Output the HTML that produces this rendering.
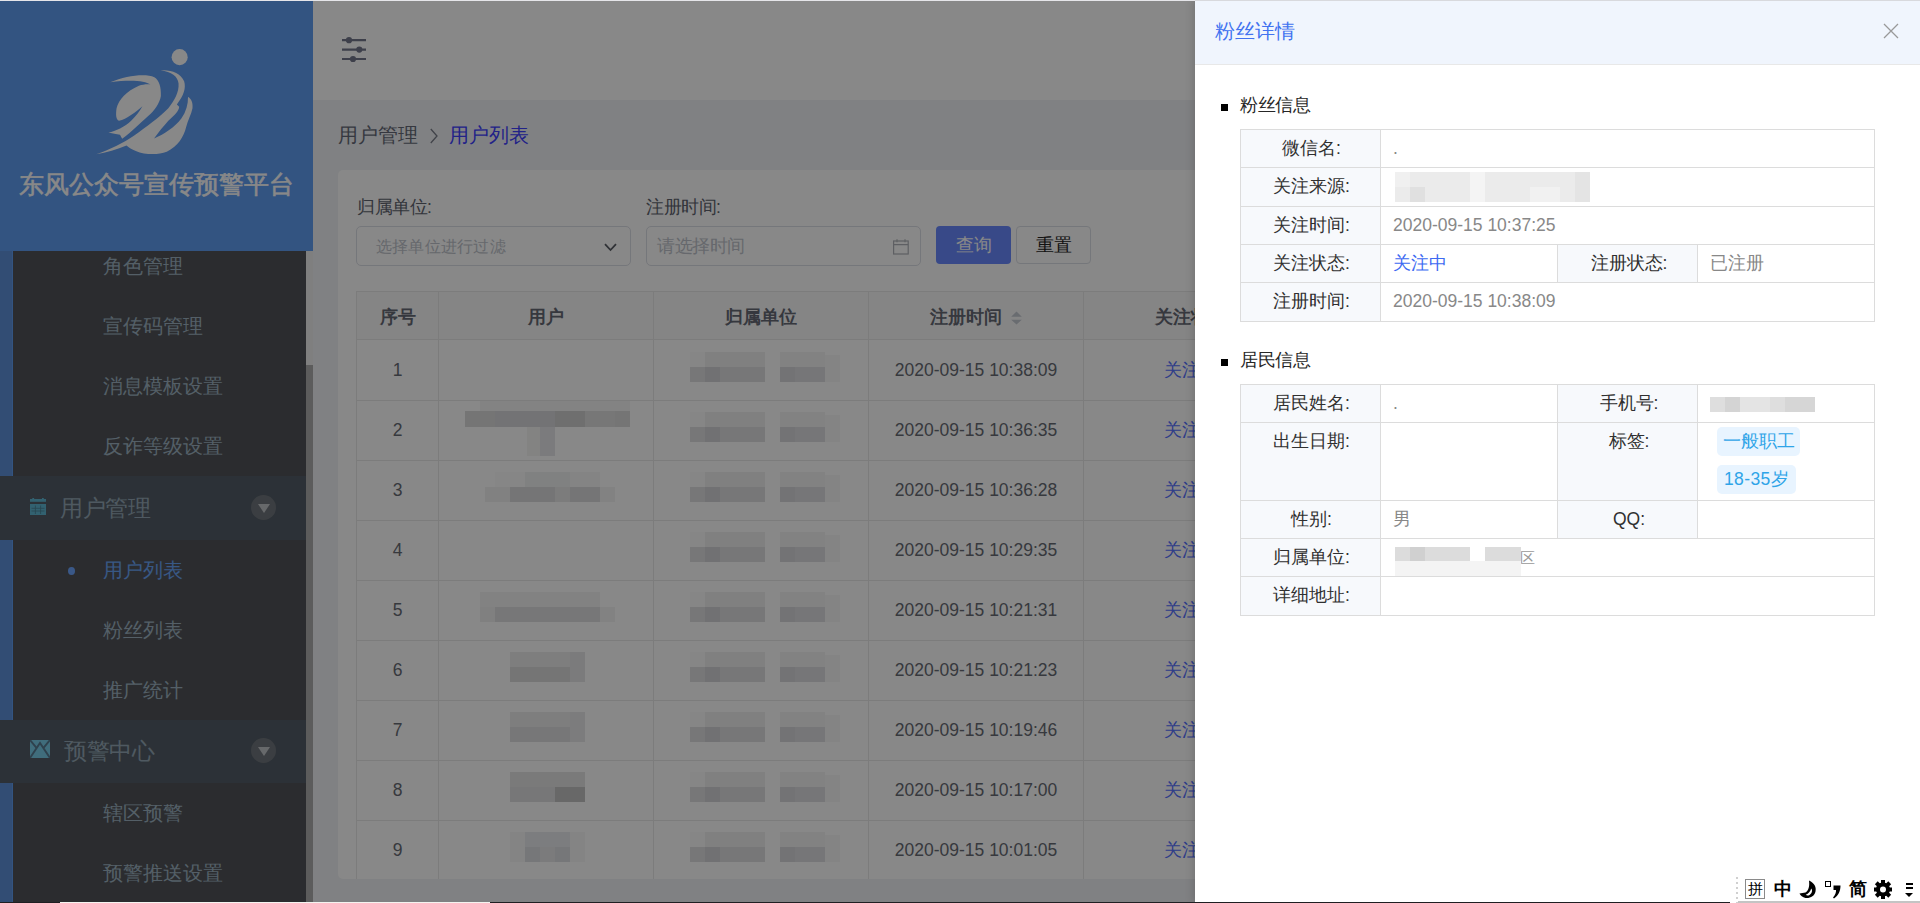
<!DOCTYPE html>
<html lang="zh">
<head>
<meta charset="utf-8">
<title>粉丝详情</title>
<style>
*{box-sizing:border-box;margin:0;padding:0}
html,body{width:1920px;height:903px;overflow:hidden;background:#f0f2f5}
body{position:relative;font-family:"Liberation Sans",sans-serif;font-size:17.5px;color:#333}
.abs{position:absolute}
/* ---------- sidebar ---------- */
#side{position:absolute;left:0;top:0;width:313px;height:903px;background:#619df2}
#side .strip{position:absolute;left:0;top:251px;width:12px;height:652px;background:#5e90da}
#logo{position:absolute;left:80px;top:30px;width:150px;height:140px}
#brand{position:absolute;left:0;top:165px;-webkit-text-stroke:0.55px #fff;width:313px;height:38px;line-height:38px;text-align:center;font-size:25px;font-weight:normal;color:#fff;white-space:nowrap}
#menu{position:absolute;left:13px;top:251px;width:293px;height:652px;background:#525458}
#sbar{position:absolute;left:306px;top:251px;width:7px;height:652px;background:#acacac}
#sbar i{position:absolute;left:0;top:0;width:7px;height:114px;background:#efefef}
.mi{position:absolute;left:102.5px;height:30px;line-height:30px;font-size:20px;color:#9db3c2;white-space:nowrap}
.mi.on{color:#6aa5f8}
.grp{position:absolute;left:0;width:306px;background:#535d67}
.grp span{position:absolute;top:0;font-size:25px;letter-spacing:-.5px;color:#94a8b6;white-space:nowrap}
.grp .arr{position:absolute;left:251px;width:25px;height:25px;border-radius:50%;background:#70757c}
.grp .arr:after{content:"";position:absolute;left:6.5px;top:9px;border-left:6px solid transparent;border-right:6px solid transparent;border-top:9px solid #c2c5c9}
/* ---------- main ---------- */
#hdr{position:absolute;left:313px;top:0;width:1607px;height:100px;background:#fff}
#crumb{position:absolute;left:338px;top:120px;height:30px;line-height:30px;font-size:20px;color:#666a78;white-space:nowrap}
#crumb b{font-weight:normal;color:#4040ff}
#card{position:absolute;left:338px;top:170px;width:1560px;height:709px;background:#fff;border-radius:5px}
.flabel{position:absolute;top:194px;height:26px;line-height:26px;font-size:17.5px;letter-spacing:-.5px;color:#60646f;white-space:nowrap}
.inp{position:absolute;top:226px;height:40px;width:275px;border:1px solid #dcdfe6;border-radius:5px;background:#fff;line-height:38px;font-size:16.25px;letter-spacing:.22px;color:#c0c4cc;white-space:nowrap}
.btn{position:absolute;top:226px;height:38px;border-radius:4px;font-size:17.5px;line-height:36px;text-align:center;white-space:nowrap}
/* table */
#tbl{position:absolute;left:356px;top:291px;width:1530px;height:588px;border-left:1px solid #e8e8e8;border-top:1px solid #e8e8e8;overflow:hidden}
#tbl .th{position:absolute;top:0;height:48px;background:#fafafa;border-right:1px solid #e8e8e8;border-bottom:1px solid #e8e8e8;text-align:center;line-height:48px;padding-top:1px;font-weight:bold;color:#656975;font-size:17.5px;white-space:nowrap}
#tbl .td{position:absolute;height:60px;border-right:1px solid #e8e8e8;border-bottom:1px solid #e8e8e8;text-align:center;line-height:60px;color:#686c74;font-size:17.5px;white-space:nowrap}
#tbl .lnk{color:#5672ff}
.px{position:absolute;background:#c9c9c9}
/* ---------- mask & drawer ---------- */
#mask{position:absolute;left:0;top:0;width:1920px;height:903px;background:rgba(0,0,0,.467)}
#drawer{position:absolute;left:1195px;top:0;width:725px;height:903px;background:#fff;box-shadow:-2px 0 8px rgba(0,0,0,.15)}
#dhead{position:absolute;left:0;top:0;width:725px;height:65px;background:#f0f5fd;border-bottom:1px solid #e8e8e8;border-top:1px solid #d8d9dd}
#dhead span{position:absolute;left:20px;top:15px;height:30px;line-height:30px;font-size:20px;color:#4172f0;white-space:nowrap}
.sec{position:absolute;left:45px;height:26px;line-height:26px;font-size:17.5px;letter-spacing:-.5px;color:#262626;white-space:nowrap}
.sec:before{content:"";position:absolute;left:-19px;top:12px;width:7px;height:7px;background:#000}
#drawer .l,#drawer .v{position:absolute;border-right:1px solid #dcdcdc;border-bottom:1px solid #dcdcdc;font-size:17.5px;white-space:nowrap}
#drawer .l{background:#f7f9fc;color:#303030;text-align:center}
#drawer .v{background:#fff;color:#888;padding-left:12px}
.tag{position:absolute;height:29px;line-height:29px;padding:0;text-align:center;border-radius:5px;background:#e8f4ff;color:#2fa4e8;font-size:17.5px;white-space:nowrap}
</style>
</head>
<body>
<div id="side">
  <div class="strip"></div>
  <svg id="logo" viewBox="0 0 968 903"><g fill="#fff">
<circle cx="643" cy="175" r="52"/>
<path d="M195 337 C300 295 420 278 480 305 C512 325 524 370 522 425 C515 470 480 520 440 555 C390 600 330 660 272 702 L258 675 C235 672 210 668 183 662 C230 652 290 625 330 585 C360 555 385 525 403 492 C360 530 300 575 252 586 C232 578 230 545 236 505 C250 450 300 395 380 360 C405 350 435 348 455 351 C420 328 330 318 195 337 Z"/>
<path d="M520 260 C590 255 650 280 672 330 C685 375 670 420 625 480 L640 495 C640 520 610 550 570 585 C540 620 505 660 478 700 C540 675 610 630 655 570 C685 525 698 480 697 432 C715 440 730 465 726 505 C718 545 695 585 685 625 C670 690 630 750 560 785 C500 808 420 805 360 780 C335 770 315 758 300 745 C240 770 170 790 105 802 C190 770 280 730 350 680 C430 625 510 565 570 505 C610 455 640 400 636 345 C632 300 590 270 520 260 Z"/>
</g></svg>
  <div id="brand">东风公众号宣传预警平台</div>
  <div id="menu"></div>
  <div id="sbar"><i></i></div>
  <div class="mi" style="top:251px">角色管理</div>
  <div class="mi" style="top:311px">宣传码管理</div>
  <div class="mi" style="top:371px">消息模板设置</div>
  <div class="mi" style="top:431px">反诈等级设置</div>
  <div class="grp" style="top:476px;height:64px">
    <svg class="abs" style="left:30px;top:22px" width="17" height="18" viewBox="0 0 17 18"><g fill="#5fb6d2"><rect x="0" y="1" width="16" height="2.8"/><rect x="2.3" y="0" width="1.8" height="1.5"/><rect x="12" y="0" width="1.8" height="1.5"/><rect x="0" y="6" width="16" height="11"/></g><g stroke="#4a8296" stroke-width="0.8"><path d="M1.5 10.3h13M1.5 13h13M5.4 7.5v8.5M10.6 7.5v8.5"/></g></svg>
    <span style="left:60px;top:16.5px;height:32px;line-height:32px;font-size:22.5px">用户管理</span>
    <div class="arr" style="top:19px"></div>
  </div>
  <div class="abs" style="left:68px;top:567px;width:7px;height:8px;border-radius:50%;background:#6ea6ff"></div>
  <div class="mi on" style="top:555px">用户列表</div>
  <div class="mi" style="top:615px">粉丝列表</div>
  <div class="mi" style="top:675px">推广统计</div>
  <div class="grp" style="top:720px;height:63px">
    <svg class="abs" style="left:30px;top:20px" width="20" height="18" viewBox="0 0 20 18"><rect x="0" y="0" width="20" height="18" fill="#78cce9"/><g fill="none" stroke="#587b91" stroke-width="1.9"><path d="M0 18L10 3L20 18"/><path d="M0 0L6.3 7.6M20 0L13.7 7.6"/></g></svg>
    <span style="left:64px;top:16px;height:32px;line-height:32px;font-size:22.5px">预警中心</span>
    <div class="arr" style="top:18px"></div>
  </div>
  <div class="mi" style="top:798px">辖区预警</div>
  <div class="mi" style="top:858px">预警推送设置</div>
</div>
<div id="hdr">
  <svg class="abs" style="left:28px;top:35px" width="26" height="30" viewBox="0 0 26 30"><g stroke="#73778c" stroke-width="2.2" fill="none"><path d="M1 5.2h24M1 14.6h24M1 24h24"/></g><g fill="#73778c"><circle cx="8" cy="5.2" r="3.1"/><circle cx="18.3" cy="14.6" r="3.1"/><circle cx="12" cy="24" r="3.1"/></g></svg>
</div>
<div id="crumb">用户管理<svg style="margin:0 11px 0 12px;vertical-align:-2px" width="8" height="16" viewBox="0 0 8 16"><path d="M0.8 1L7 8L0.8 15" fill="none" stroke="#7a7e8a" stroke-width="1.3"/></svg><b>用户列表</b></div>
<div id="card"></div>
<div class="flabel" style="left:357px">归属单位:</div>
<div class="flabel" style="left:646px">注册时间:</div>
<div class="inp" style="left:356px;padding-left:19px">选择单位进行过滤<svg class="abs" style="right:13px;top:15.5px" width="13" height="9" viewBox="0 0 13 9"><path d="M1 1.2L6.5 7L12 1.2" fill="none" stroke="#5a5e66" stroke-width="1.8"/></svg></div>
<div class="inp" style="left:646px;padding-left:10px;font-size:17.5px;letter-spacing:-.5px">请选择时间<svg class="abs" style="right:11px;top:12px" width="16" height="16" viewBox="0 0 16 16"><g fill="none" stroke="#b0b3ba" stroke-width="1.2"><rect x="0.6" y="2" width="14.6" height="13"/><path d="M0.6 5.6h14.6M4 0.3v3M12 0.3v3"/></g></svg></div>
<div class="btn" style="left:936px;width:75px;background:#6a8aff;color:#fff;line-height:38px">查询</div>
<div class="btn" style="left:1016px;width:75px;border:1px solid #dcdfe6;color:#222;background:#fff">重置</div>
<div id="tbl"><div class="th" style="left:0px;width:82px">序号</div><div class="th" style="left:82px;width:215px">用户</div><div class="th" style="left:297px;width:215px">归属单位</div><div class="th" style="left:512px;width:215px">注册时间<svg style="margin-left:9px;vertical-align:-2px" width="11" height="14" viewBox="0 0 11 14"><path d="M5.5 0.6L10.8 5.8H0.2Z M5.5 13.6L10.8 8.8H0.2Z" fill="#c6cad2"/></svg></div><div class="th" style="left:727px;width:215px">关注状态</div><div class="th" style="left:942px;width:215px">注册状态</div><div class="th" style="left:1157px;width:215px">操作</div><div class="td" style="left:0px;top:48px;width:82px;height:61px;line-height:61px">1</div><div class="td" style="left:82px;top:48px;width:215px;height:61px;line-height:61px"></div><div class="td" style="left:297px;top:48px;width:215px;height:61px;line-height:61px"></div><div class="td" style="left:512px;top:48px;width:215px;height:61px;line-height:61px">2020-09-15 10:38:09</div><div class="td" style="left:727px;top:48px;width:215px;height:61px;line-height:61px"><span class="lnk">关注中</span></div><div class="td" style="left:942px;top:48px;width:215px;height:61px;line-height:61px">已注册</div><div class="td" style="left:1157px;top:48px;width:215px;height:61px;line-height:61px">详情</div><div class="td" style="left:0px;top:109px;width:82px;line-height:58px">2</div><div class="td" style="left:82px;top:109px;width:215px;line-height:58px"></div><div class="td" style="left:297px;top:109px;width:215px;line-height:58px"></div><div class="td" style="left:512px;top:109px;width:215px;line-height:58px">2020-09-15 10:36:35</div><div class="td" style="left:727px;top:109px;width:215px;line-height:58px"><span class="lnk">关注中</span></div><div class="td" style="left:942px;top:109px;width:215px;line-height:58px">已注册</div><div class="td" style="left:1157px;top:109px;width:215px;line-height:58px">详情</div><div class="td" style="left:0px;top:169px;width:82px;line-height:58px">3</div><div class="td" style="left:82px;top:169px;width:215px;line-height:58px"></div><div class="td" style="left:297px;top:169px;width:215px;line-height:58px"></div><div class="td" style="left:512px;top:169px;width:215px;line-height:58px">2020-09-15 10:36:28</div><div class="td" style="left:727px;top:169px;width:215px;line-height:58px"><span class="lnk">关注中</span></div><div class="td" style="left:942px;top:169px;width:215px;line-height:58px">已注册</div><div class="td" style="left:1157px;top:169px;width:215px;line-height:58px">详情</div><div class="td" style="left:0px;top:229px;width:82px;line-height:58px">4</div><div class="td" style="left:82px;top:229px;width:215px;line-height:58px"></div><div class="td" style="left:297px;top:229px;width:215px;line-height:58px"></div><div class="td" style="left:512px;top:229px;width:215px;line-height:58px">2020-09-15 10:29:35</div><div class="td" style="left:727px;top:229px;width:215px;line-height:58px"><span class="lnk">关注中</span></div><div class="td" style="left:942px;top:229px;width:215px;line-height:58px">已注册</div><div class="td" style="left:1157px;top:229px;width:215px;line-height:58px">详情</div><div class="td" style="left:0px;top:289px;width:82px;line-height:58px">5</div><div class="td" style="left:82px;top:289px;width:215px;line-height:58px"></div><div class="td" style="left:297px;top:289px;width:215px;line-height:58px"></div><div class="td" style="left:512px;top:289px;width:215px;line-height:58px">2020-09-15 10:21:31</div><div class="td" style="left:727px;top:289px;width:215px;line-height:58px"><span class="lnk">关注中</span></div><div class="td" style="left:942px;top:289px;width:215px;line-height:58px">已注册</div><div class="td" style="left:1157px;top:289px;width:215px;line-height:58px">详情</div><div class="td" style="left:0px;top:349px;width:82px;line-height:58px">6</div><div class="td" style="left:82px;top:349px;width:215px;line-height:58px"></div><div class="td" style="left:297px;top:349px;width:215px;line-height:58px"></div><div class="td" style="left:512px;top:349px;width:215px;line-height:58px">2020-09-15 10:21:23</div><div class="td" style="left:727px;top:349px;width:215px;line-height:58px"><span class="lnk">关注中</span></div><div class="td" style="left:942px;top:349px;width:215px;line-height:58px">已注册</div><div class="td" style="left:1157px;top:349px;width:215px;line-height:58px">详情</div><div class="td" style="left:0px;top:409px;width:82px;line-height:58px">7</div><div class="td" style="left:82px;top:409px;width:215px;line-height:58px"></div><div class="td" style="left:297px;top:409px;width:215px;line-height:58px"></div><div class="td" style="left:512px;top:409px;width:215px;line-height:58px">2020-09-15 10:19:46</div><div class="td" style="left:727px;top:409px;width:215px;line-height:58px"><span class="lnk">关注中</span></div><div class="td" style="left:942px;top:409px;width:215px;line-height:58px">已注册</div><div class="td" style="left:1157px;top:409px;width:215px;line-height:58px">详情</div><div class="td" style="left:0px;top:469px;width:82px;line-height:58px">8</div><div class="td" style="left:82px;top:469px;width:215px;line-height:58px"></div><div class="td" style="left:297px;top:469px;width:215px;line-height:58px"></div><div class="td" style="left:512px;top:469px;width:215px;line-height:58px">2020-09-15 10:17:00</div><div class="td" style="left:727px;top:469px;width:215px;line-height:58px"><span class="lnk">关注中</span></div><div class="td" style="left:942px;top:469px;width:215px;line-height:58px">已注册</div><div class="td" style="left:1157px;top:469px;width:215px;line-height:58px">详情</div><div class="td" style="left:0px;top:529px;width:82px;line-height:58px">9</div><div class="td" style="left:82px;top:529px;width:215px;line-height:58px"></div><div class="td" style="left:297px;top:529px;width:215px;line-height:58px"></div><div class="td" style="left:512px;top:529px;width:215px;line-height:58px">2020-09-15 10:01:05</div><div class="td" style="left:727px;top:529px;width:215px;line-height:58px"><span class="lnk">关注中</span></div><div class="td" style="left:942px;top:529px;width:215px;line-height:58px">已注册</div><div class="td" style="left:1157px;top:529px;width:215px;line-height:58px">详情</div><div class="px" style="left:333px;top:60px;width:15px;height:15px;background:#fcfcfc"></div><div class="px" style="left:348px;top:60px;width:60px;height:15px;background:#f0f0f0"></div><div class="px" style="left:423px;top:60px;width:45px;height:15px;background:#f3f3f3"></div><div class="px" style="left:468px;top:63px;width:15px;height:27px;background:#f7f7f7"></div><div class="px" style="left:333px;top:75px;width:75px;height:15px;background:#dfdfe2"></div><div class="px" style="left:348px;top:75px;width:15px;height:15px;background:#d5d5d8"></div><div class="px" style="left:423px;top:75px;width:45px;height:15px;background:#dedee1"></div><div class="px" style="left:423px;top:75px;width:15px;height:15px;background:#d8d8db"></div><div class="px" style="left:333px;top:120px;width:15px;height:15px;background:#fcfcfc"></div><div class="px" style="left:348px;top:120px;width:60px;height:15px;background:#f0f0f0"></div><div class="px" style="left:423px;top:120px;width:45px;height:15px;background:#f3f3f3"></div><div class="px" style="left:468px;top:123px;width:15px;height:27px;background:#f7f7f7"></div><div class="px" style="left:333px;top:135px;width:75px;height:15px;background:#dfdfe2"></div><div class="px" style="left:348px;top:135px;width:15px;height:15px;background:#d5d5d8"></div><div class="px" style="left:423px;top:135px;width:45px;height:15px;background:#dedee1"></div><div class="px" style="left:423px;top:135px;width:15px;height:15px;background:#d8d8db"></div><div class="px" style="left:333px;top:180px;width:15px;height:15px;background:#fcfcfc"></div><div class="px" style="left:348px;top:180px;width:60px;height:15px;background:#f0f0f0"></div><div class="px" style="left:423px;top:180px;width:45px;height:15px;background:#f3f3f3"></div><div class="px" style="left:468px;top:183px;width:15px;height:27px;background:#f7f7f7"></div><div class="px" style="left:333px;top:195px;width:75px;height:15px;background:#dfdfe2"></div><div class="px" style="left:348px;top:195px;width:15px;height:15px;background:#d5d5d8"></div><div class="px" style="left:423px;top:195px;width:45px;height:15px;background:#dedee1"></div><div class="px" style="left:423px;top:195px;width:15px;height:15px;background:#d8d8db"></div><div class="px" style="left:333px;top:240px;width:15px;height:15px;background:#fcfcfc"></div><div class="px" style="left:348px;top:240px;width:60px;height:15px;background:#f0f0f0"></div><div class="px" style="left:423px;top:240px;width:45px;height:15px;background:#f3f3f3"></div><div class="px" style="left:468px;top:243px;width:15px;height:27px;background:#f7f7f7"></div><div class="px" style="left:333px;top:255px;width:75px;height:15px;background:#dfdfe2"></div><div class="px" style="left:348px;top:255px;width:15px;height:15px;background:#d5d5d8"></div><div class="px" style="left:423px;top:255px;width:45px;height:15px;background:#dedee1"></div><div class="px" style="left:423px;top:255px;width:15px;height:15px;background:#d8d8db"></div><div class="px" style="left:333px;top:300px;width:15px;height:15px;background:#fcfcfc"></div><div class="px" style="left:348px;top:300px;width:60px;height:15px;background:#f0f0f0"></div><div class="px" style="left:423px;top:300px;width:45px;height:15px;background:#f3f3f3"></div><div class="px" style="left:468px;top:303px;width:15px;height:27px;background:#f7f7f7"></div><div class="px" style="left:333px;top:315px;width:75px;height:15px;background:#dfdfe2"></div><div class="px" style="left:348px;top:315px;width:15px;height:15px;background:#d5d5d8"></div><div class="px" style="left:423px;top:315px;width:45px;height:15px;background:#dedee1"></div><div class="px" style="left:423px;top:315px;width:15px;height:15px;background:#d8d8db"></div><div class="px" style="left:333px;top:360px;width:15px;height:15px;background:#fcfcfc"></div><div class="px" style="left:348px;top:360px;width:60px;height:15px;background:#f0f0f0"></div><div class="px" style="left:423px;top:360px;width:45px;height:15px;background:#f3f3f3"></div><div class="px" style="left:468px;top:363px;width:15px;height:27px;background:#f7f7f7"></div><div class="px" style="left:333px;top:375px;width:75px;height:15px;background:#dfdfe2"></div><div class="px" style="left:348px;top:375px;width:15px;height:15px;background:#d5d5d8"></div><div class="px" style="left:423px;top:375px;width:45px;height:15px;background:#dedee1"></div><div class="px" style="left:423px;top:375px;width:15px;height:15px;background:#d8d8db"></div><div class="px" style="left:333px;top:420px;width:15px;height:15px;background:#fcfcfc"></div><div class="px" style="left:348px;top:420px;width:60px;height:15px;background:#f0f0f0"></div><div class="px" style="left:423px;top:420px;width:45px;height:15px;background:#f3f3f3"></div><div class="px" style="left:468px;top:423px;width:15px;height:27px;background:#f7f7f7"></div><div class="px" style="left:333px;top:435px;width:75px;height:15px;background:#dfdfe2"></div><div class="px" style="left:348px;top:435px;width:15px;height:15px;background:#d5d5d8"></div><div class="px" style="left:423px;top:435px;width:45px;height:15px;background:#dedee1"></div><div class="px" style="left:423px;top:435px;width:15px;height:15px;background:#d8d8db"></div><div class="px" style="left:333px;top:480px;width:15px;height:15px;background:#fcfcfc"></div><div class="px" style="left:348px;top:480px;width:60px;height:15px;background:#f0f0f0"></div><div class="px" style="left:423px;top:480px;width:45px;height:15px;background:#f3f3f3"></div><div class="px" style="left:468px;top:483px;width:15px;height:27px;background:#f7f7f7"></div><div class="px" style="left:333px;top:495px;width:75px;height:15px;background:#dfdfe2"></div><div class="px" style="left:348px;top:495px;width:15px;height:15px;background:#d5d5d8"></div><div class="px" style="left:423px;top:495px;width:45px;height:15px;background:#dedee1"></div><div class="px" style="left:423px;top:495px;width:15px;height:15px;background:#d8d8db"></div><div class="px" style="left:333px;top:540px;width:15px;height:15px;background:#fcfcfc"></div><div class="px" style="left:348px;top:540px;width:60px;height:15px;background:#f0f0f0"></div><div class="px" style="left:423px;top:540px;width:45px;height:15px;background:#f3f3f3"></div><div class="px" style="left:468px;top:543px;width:15px;height:27px;background:#f7f7f7"></div><div class="px" style="left:333px;top:555px;width:75px;height:15px;background:#dfdfe2"></div><div class="px" style="left:348px;top:555px;width:15px;height:15px;background:#d5d5d8"></div><div class="px" style="left:423px;top:555px;width:45px;height:15px;background:#dedee1"></div><div class="px" style="left:423px;top:555px;width:15px;height:15px;background:#d8d8db"></div><div class="px" style="left:123px;top:109px;width:150px;height:10px;background:#f6f6f6"></div><div class="px" style="left:108px;top:119px;width:165px;height:16px;background:#dcdcdc"></div><div class="px" style="left:138px;top:119px;width:60px;height:16px;background:#d8d8db"></div><div class="px" style="left:198px;top:119px;width:30px;height:16px;background:#d0d0d0"></div><div class="px" style="left:228px;top:119px;width:30px;height:16px;background:#e0e0e0"></div><div class="px" style="left:170px;top:135px;width:13px;height:29px;background:#f6f6f4"></div><div class="px" style="left:183px;top:135px;width:15px;height:29px;background:#e6e7ea"></div><div class="px" style="left:138px;top:180px;width:30px;height:15px;background:#fcfcfc"></div><div class="px" style="left:168px;top:180px;width:45px;height:15px;background:#f0f2f2"></div><div class="px" style="left:213px;top:180px;width:30px;height:15px;background:#f7f7f7"></div><div class="px" style="left:128px;top:195px;width:25px;height:15px;background:#f2f2f2"></div><div class="px" style="left:153px;top:195px;width:90px;height:15px;background:#dcdcde"></div><div class="px" style="left:198px;top:195px;width:15px;height:15px;background:#e8e8e8"></div><div class="px" style="left:243px;top:195px;width:15px;height:15px;background:#f4f4f4"></div><div class="px" style="left:123px;top:300px;width:120px;height:15px;background:#f3f3f3"></div><div class="px" style="left:138px;top:315px;width:105px;height:15px;background:#dfdfe2"></div><div class="px" style="left:123px;top:315px;width:15px;height:15px;background:#f0f0f0"></div><div class="px" style="left:243px;top:315px;width:15px;height:15px;background:#f4f4f4"></div><div class="px" style="left:153px;top:360px;width:75px;height:15px;background:#ececec"></div><div class="px" style="left:153px;top:375px;width:75px;height:15px;background:#dcdcdc"></div><div class="px" style="left:213px;top:360px;width:15px;height:30px;background:#e6e6e8"></div><div class="px" style="left:153px;top:420px;width:75px;height:15px;background:#ececec"></div><div class="px" style="left:153px;top:435px;width:75px;height:15px;background:#dfdfe2"></div><div class="px" style="left:213px;top:420px;width:15px;height:30px;background:#e8e8ea"></div><div class="px" style="left:153px;top:480px;width:75px;height:15px;background:#e4e4e4"></div><div class="px" style="left:153px;top:495px;width:45px;height:15px;background:#dfdfe2"></div><div class="px" style="left:198px;top:495px;width:30px;height:15px;background:#c4c4c4"></div><div class="px" style="left:153px;top:540px;width:75px;height:30px;background:#f8f8f8"></div><div class="px" style="left:168px;top:540px;width:45px;height:15px;background:#e8eaee"></div><div class="px" style="left:168px;top:555px;width:45px;height:15px;background:#dddfe3"></div><div class="px" style="left:183px;top:555px;width:15px;height:15px;background:#e6e6e8"></div></div>
<div id="mask"></div>
<div id="drawer">
  <div id="dhead"><span>粉丝详情</span></div>
<svg class="abs" style="left:688px;top:23px" width="16" height="16" viewBox="0 0 16 16"><path d="M1 1L15 15M15 1L1 15" stroke="#999" stroke-width="1.3" fill="none"/></svg>
<div class="sec" style="top:92px">粉丝信息</div>
<div class="abs" style="left:45px;top:129px;width:635px;height:1px;background:#dcdcdc"></div>
<div class="abs" style="left:45px;top:129px;width:1px;height:193px;background:#dcdcdc"></div>
<div class="l" style="left:46px;top:130px;width:140px;height:38px;line-height:27.5px;padding-top:4.75px;padding-left:2px">微信名:</div>
<div class="v" style="left:186px;top:130px;width:494px;height:38px;line-height:27.5px;padding-top:4.75px">.</div>
<div class="l" style="left:46px;top:168px;width:140px;height:39px;line-height:27.5px;padding-top:5.25px;padding-left:2px">关注来源:</div>
<div class="v" style="left:186px;top:168px;width:494px;height:39px;line-height:27.5px;padding-top:5.25px"></div>
<div class="l" style="left:46px;top:207px;width:140px;height:38px;line-height:27.5px;padding-top:4.75px;padding-left:2px">关注时间:</div>
<div class="v" style="left:186px;top:207px;width:494px;height:38px;line-height:27.5px;padding-top:4.75px">2020-09-15 10:37:25</div>
<div class="l" style="left:46px;top:245px;width:140px;height:38px;line-height:27.5px;padding-top:4.75px;padding-left:2px">关注状态:</div>
<div class="v" style="left:186px;top:245px;width:177px;height:38px;line-height:27.5px;padding-top:4.75px"><span style="color:#3d6af2">关注中</span></div>
<div class="l" style="left:363px;top:245px;width:140px;height:38px;line-height:27.5px;padding-top:4.75px;padding-left:3px">注册状态:</div>
<div class="v" style="left:503px;top:245px;width:177px;height:38px;line-height:27.5px;padding-top:4.75px">已注册</div>
<div class="l" style="left:46px;top:283px;width:140px;height:39px;line-height:27.5px;padding-top:5.25px;padding-left:2px">注册时间:</div>
<div class="v" style="left:186px;top:283px;width:494px;height:39px;line-height:27.5px;padding-top:5.25px">2020-09-15 10:38:09</div>
<div class="abs" style="left:200px;top:172px;width:75px;height:30px;background:#ebebeb"></div>
<div class="abs" style="left:215px;top:187px;width:15px;height:15px;background:#e0e0e0"></div>
<div class="abs" style="left:200px;top:172px;width:15px;height:15px;background:#f0f0f0"></div>
<div class="abs" style="left:275px;top:172px;width:15px;height:30px;background:#f4f4f4"></div>
<div class="abs" style="left:290px;top:172px;width:105px;height:30px;background:#ebebeb"></div>
<div class="abs" style="left:335px;top:187px;width:30px;height:15px;background:#f1f1f1"></div>
<div class="abs" style="left:380px;top:172px;width:15px;height:30px;background:#e4e4e4"></div>
<div class="sec" style="top:347px">居民信息</div>
<div class="abs" style="left:45px;top:384px;width:635px;height:1px;background:#dcdcdc"></div>
<div class="abs" style="left:45px;top:384px;width:1px;height:232px;background:#dcdcdc"></div>
<div class="l" style="left:46px;top:385px;width:140px;height:38px;line-height:27.5px;padding-top:4.75px;padding-left:2px">居民姓名:</div>
<div class="v" style="left:186px;top:385px;width:177px;height:38px;line-height:27.5px;padding-top:4.75px">.</div>
<div class="l" style="left:363px;top:385px;width:140px;height:38px;line-height:27.5px;padding-top:4.75px;padding-left:3px">手机号:</div>
<div class="v" style="left:503px;top:385px;width:177px;height:38px;line-height:27.5px;padding-top:4.75px"></div>
<div class="l" style="left:46px;top:423px;width:140px;height:78px;line-height:27.5px;padding-top:5px;padding-left:2px">出生日期:</div>
<div class="v" style="left:186px;top:423px;width:177px;height:78px;line-height:27.5px;padding-top:5px"></div>
<div class="l" style="left:363px;top:423px;width:140px;height:78px;line-height:27.5px;padding-top:5px;padding-left:3px">标签:</div>
<div class="v" style="left:503px;top:423px;width:177px;height:78px;line-height:27.5px;padding-top:5px"></div>
<div class="l" style="left:46px;top:501px;width:140px;height:38px;line-height:27.5px;padding-top:4.75px;padding-left:2px">性别:</div>
<div class="v" style="left:186px;top:501px;width:177px;height:38px;line-height:27.5px;padding-top:4.75px">男</div>
<div class="l" style="left:363px;top:501px;width:140px;height:38px;line-height:27.5px;padding-top:4.75px;padding-left:3px">QQ:</div>
<div class="v" style="left:503px;top:501px;width:177px;height:38px;line-height:27.5px;padding-top:4.75px"></div>
<div class="l" style="left:46px;top:539px;width:140px;height:38px;line-height:27.5px;padding-top:4.75px;padding-left:2px">归属单位:</div>
<div class="v" style="left:186px;top:539px;width:494px;height:38px;line-height:27.5px;padding-top:4.75px"><span style="margin-left:127px;font-size:14.5px;color:#999">区</span></div>
<div class="l" style="left:46px;top:577px;width:140px;height:39px;line-height:27.5px;padding-top:5.25px;padding-left:2px">详细地址:</div>
<div class="v" style="left:186px;top:577px;width:494px;height:39px;line-height:27.5px;padding-top:5.25px"></div>
<div class="tag" style="left:522px;top:427px;width:83px">一般职工</div>
<div class="tag" style="left:522px;top:465px;width:79px;letter-spacing:.4px">18-35岁</div>
<div class="abs" style="left:515px;top:397px;width:105px;height:15px;background:#dedede"></div>
<div class="abs" style="left:530px;top:397px;width:15px;height:15px;background:#d4d4d4"></div>
<div class="abs" style="left:545px;top:397px;width:30px;height:15px;background:#e4e4e4"></div>
<div class="abs" style="left:590px;top:397px;width:30px;height:15px;background:#d6d6d6"></div>
<div class="abs" style="left:200px;top:547px;width:75px;height:14px;background:#dcdcdc"></div>
<div class="abs" style="left:215px;top:547px;width:15px;height:14px;background:#d0d0d0"></div>
<div class="abs" style="left:290px;top:547px;width:36px;height:14px;background:#dcdcdc"></div>
<div class="abs" style="left:200px;top:561px;width:126px;height:15px;background:#f4f4f4"></div>
</div>
<div class="abs" style="left:0;top:0;width:1195px;height:1px;background:#e5e5e9"></div>
<div class="abs" style="left:1195px;top:0;width:725px;height:1px;background:#d8d9dd"></div>
<div class="abs" style="left:0;top:902px;width:1730px;height:1px;background:#1f1f22"></div>
<div class="abs" style="left:60px;top:902px;width:430px;height:1px;background:#f4f4f0"></div>
<div class="abs" style="left:1737px;top:901px;width:183px;height:2px;background:#c4c4c4"></div>
<div id="ime" class="abs" style="left:1732px;top:874px;width:188px;height:27px;background:#fff;color:#000;font-weight:bold;font-size:18px;line-height:20px">
<div class="abs" style="left:4px;top:3px;width:2px;height:26px;background:repeating-linear-gradient(#d0d0d0 0 2px,#fff 2px 5px)"></div>
<div class="abs" style="left:13px;top:5px;width:20px;height:20px;border:1px solid #8a8a8a;font-size:15px;font-weight:normal;line-height:18px;text-align:center">拼</div>
<div class="abs" style="left:41px;top:5px;width:19px;text-align:center">中</div>
<svg class="abs" style="left:67px;top:6px" width="18" height="19" viewBox="0 0 18 19"><path d="M10 0.5C15.5 3 17.5 7 16.5 11.5C15.5 16 11.5 18.5 6.5 18C3.5 17.5 1.5 15.5 0.5 13.5L6.5 12.5C9.5 10.5 10.8 6.5 10 0.5Z" fill="#000"/><path d="M12.2 8.5C13.8 10 13 13.5 10.5 15C9 15.8 7.5 15.6 6.8 14.8C9.5 13.5 11.5 11.5 12.2 8.5Z" fill="#fff"/></svg>
<div class="abs" style="left:93px;top:7px;width:6px;height:6px;border:1.6px solid #000"></div>
<svg class="abs" style="left:100px;top:11px" width="9" height="14" viewBox="0 0 9 14"><path d="M1.5 0.5H8.5C8.5 6 6.5 10.5 2 13.5L1 12.5C3.5 9.5 4.2 7.5 4 5H1.5Z" fill="#000"/></svg>
<div class="abs" style="left:116px;top:5px;width:19px;text-align:center">简</div>
<svg class="abs" style="left:142px;top:6px" width="18" height="19" viewBox="0 0 18 19"><g fill="#000"><circle cx="9" cy="9.5" r="7"/><g><rect x="7" y="0" width="4" height="19"/><rect x="-0.5" y="7.5" width="19" height="4"/><rect x="7" y="0" width="4" height="19" transform="rotate(45 9 9.5)"/><rect x="7" y="0" width="4" height="19" transform="rotate(-45 9 9.5)"/></g></g><circle cx="9" cy="9.5" r="3" fill="#fff"/></svg>
<div class="abs" style="left:174px;top:9px;width:7px;height:2px;background:#000"></div>
<div class="abs" style="left:174px;top:13px;width:7px;height:2px;background:#000"></div>
<div class="abs" style="left:173px;top:19px;border-left:4.5px solid transparent;border-right:4.5px solid transparent;border-top:4.5px solid #000"></div>
</div>
</body>
</html>
